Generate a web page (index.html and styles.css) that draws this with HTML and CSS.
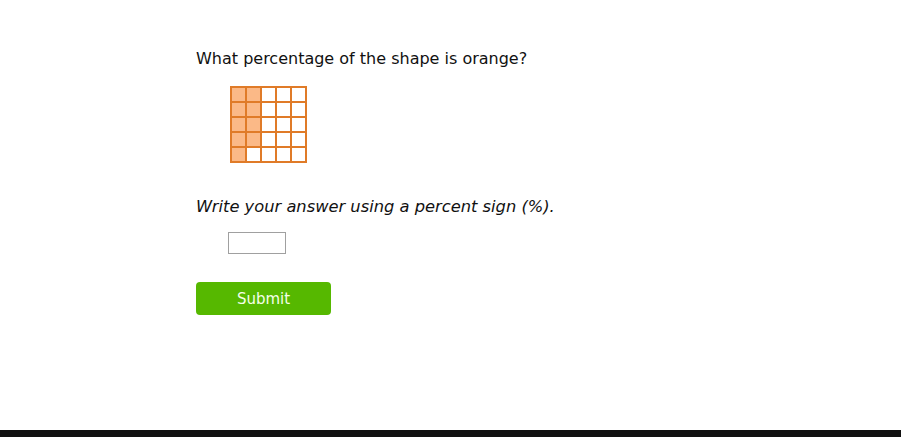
FILE: index.html
```html
<!DOCTYPE html>
<html lang="en">
<head>
    <meta charset="UTF-8">
    <meta name="viewport" content="width=device-width, initial-scale=1.0">
    <title>Percentage Question</title>
    <link rel="stylesheet" href="styles.css">
</head>
<body>
    <div class="page">
        <div class="question">
            <p class="prompt">What percentage of the shape is orange?</p>
            <div class="shape">
                <svg width="80" height="80" viewBox="0 0 80 80">
                    <g fill="#fbb987">
                        <rect x="1" y="1" width="30" height="60"/>
                        <rect x="1" y="61" width="15" height="15"/>
                    </g>
                    <g stroke="#e07b28" stroke-width="2" fill="none">
                        <rect x="1" y="1" width="75" height="75"/>
                        <line x1="16" y1="1" x2="16" y2="76"/>
                        <line x1="31" y1="1" x2="31" y2="76"/>
                        <line x1="46" y1="1" x2="46" y2="76"/>
                        <line x1="61" y1="1" x2="61" y2="76"/>
                        <line x1="1" y1="16" x2="76" y2="16"/>
                        <line x1="1" y1="31" x2="76" y2="31"/>
                        <line x1="1" y1="46" x2="76" y2="46"/>
                        <line x1="1" y1="61" x2="76" y2="61"/>
                    </g>
                </svg>
            </div>
            <p class="hint">Write your answer using a percent sign (%).</p>
            <div class="answer">
                <input type="text" class="answer-box">
            </div>
            <button class="submit">Submit</button>
        </div>
        <div class="footer-bar"></div>
    </div>
</body>
</html>
```

FILE: styles.css
```css
body {
    margin: 0;
    background-color: #ffffff;
    font-family: "DejaVu Sans", sans-serif;
    color: #111111;
}
.page {
    height: 437px;
    display: flex;
    flex-direction: column;
    justify-content: space-between;
}
.question {
    padding: 49px 0 0 196px;
}
.prompt {
    margin: 0;
    font-size: 16px;
    line-height: 19px;
}
.shape {
    margin: 18px 0 0 34px;
    height: 80px;
}
.shape svg {
    display: block;
}
.hint {
    margin: 31px 0 0 0;
    font-size: 16.3px;
    line-height: 19px;
    font-style: italic;
}
.answer {
    margin: 16px 0 0 32px;
}
.answer-box {
    display: block;
    box-sizing: border-box;
    width: 58px;
    height: 22px;
    margin: 0;
    border: 1px solid #a0a0a0;
    padding: 2px 4px;
    font-family: "DejaVu Sans", sans-serif;
}
.submit {
    margin-top: 28px;
    width: 135px;
    height: 33px;
    border: none;
    border-radius: 4px;
    background-color: #56b800;
    color: #f4ffe8;
    font-family: "DejaVu Sans", sans-serif;
    font-size: 15px;
    cursor: pointer;
}
.footer-bar {
    height: 7px;
    background-color: #111111;
}
```
